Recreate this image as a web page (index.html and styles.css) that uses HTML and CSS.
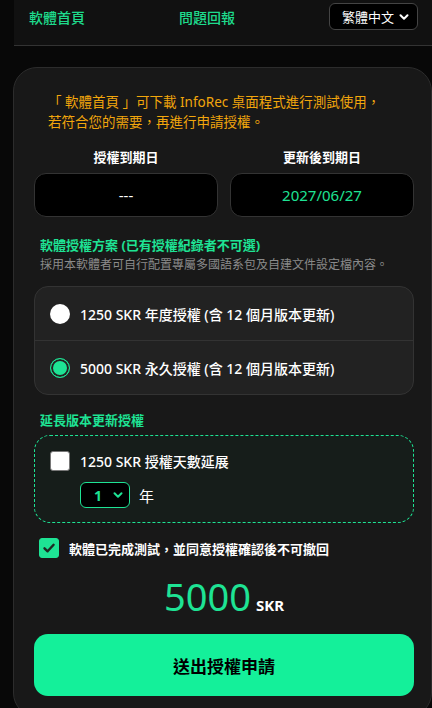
FILE: index.html
```html
<!DOCTYPE html>
<html lang="zh-Hant">
<head>
    <meta charset="UTF-8">
    <meta name="viewport" content="width=device-width, initial-scale=1.0">
    <title>InfoRec 授權申請</title>
    <link rel="stylesheet" href="styles.css">
</head>
<body>
    <div class="page">
        <header class="topbar">
            <a class="nav-link" href="#">軟體首頁</a>
            <a class="nav-link" href="#">問題回報</a>
            <div class="lang-select">
                <span>繁體中文</span>
                <svg width="12" height="12" viewBox="0 0 12 12"><path d="M2.5 4.2 6 7.7l3.5-3.5" fill="none" stroke="#fff" stroke-width="2" stroke-linecap="round" stroke-linejoin="round"/></svg>
            </div>
        </header>

        <main class="card">
            <p class="notice">「 軟體首頁 」可下載 InfoRec 桌面程式進行測試使用，<br>若符合您的需要，再進行申請授權。</p>

            <div class="dates">
                <div class="date-col">
                    <div class="date-label">授權到期日</div>
                    <div class="date-box">---</div>
                </div>
                <div class="date-col">
                    <div class="date-label">更新後到期日</div>
                    <div class="date-box green">2027/06/27</div>
                </div>
            </div>

            <div class="section-title">軟體授權方案 (已有授權紀錄者不可選)</div>
            <div class="section-sub">採用本軟體者可自行配置專屬多國語系包及自建文件設定檔內容。</div>

            <div class="plans">
                <label class="plan">
                    <input type="radio" name="plan" class="radio">
                    <span>1250 SKR 年度授權 (含 12 個月版本更新)</span>
                </label>
                <label class="plan">
                    <input type="radio" name="plan" class="radio" checked>
                    <span>5000 SKR 永久授權 (含 12 個月版本更新)</span>
                </label>
            </div>

            <div class="section-title ext-title">延長版本更新授權</div>
            <div class="extend">
                <label class="extend-row">
                    <span class="box"></span>
                    <span>1250 SKR 授權天數延展</span>
                </label>
                <div class="year-row">
                    <div class="year-select">
                        <span>1</span>
                        <svg width="12" height="12" viewBox="0 0 12 12"><path d="M2.5 4.2 6 7.7l3.5-3.5" fill="none" stroke="#1ee394" stroke-width="2" stroke-linecap="round" stroke-linejoin="round"/></svg>
                    </div>
                    <span class="year-unit">年</span>
                </div>
            </div>

            <label class="agree">
                <span class="box checked">
                    <svg width="14" height="14" viewBox="0 0 14 14"><path d="M2.5 7.3 5.6 10.3 11.6 3.8" fill="none" stroke="#1e2a24" stroke-width="2.4" stroke-linecap="round" stroke-linejoin="round"/></svg>
                </span>
                <span>軟體已完成測試，並同意授權確認後不可撤回</span>
            </label>

            <div class="total">
                <span class="amount">5000</span>
                <span class="unit">SKR</span>
            </div>

            <button class="submit">送出授權申請</button>
        </main>
    </div>
</body>
</html>
```

FILE: styles.css
```css
body {
    margin: 0;
    background: #080808;
    font-family: "Noto Sans", "Noto Sans CJK TC", sans-serif;
    color: #fff;
    overflow: hidden;
}
.page {
    padding-left: 14px;
}
.topbar {
    display: flex;
    align-items: center;
    gap: 94px;
    height: 27px;
    padding: 3px 0 15px 15px;
    background: #111;
    border-bottom: 1px solid #333;
}
.nav-link {
    color: #1edb8c;
    text-decoration: none;
    font-size: 14px;
    font-weight: 500;
}
.lang-select {
    display: flex;
    align-items: center;
    justify-content: space-between;
    box-sizing: border-box;
    width: 89px;
    height: 27px;
    padding: 0 7px 0 12px;
    background: #000;
    border: 1px solid #444;
    border-radius: 6px;
    font-size: 13px;
}
.card {
    display: block;
    margin: 21px 0 0 -1px;
    padding: 20px 17px 20px 20px;
    background: #181818;
    border: 1px solid #2c2c2c;
    border-radius: 24px;
}
.notice {
    margin: 4px 0 0;
    padding: 0 0 0 14px;
    color: #f2a60c;
    font-size: 13.5px;
    line-height: 20px;
    white-space: nowrap;
}
.dates {
    display: grid;
    grid-template-columns: 1fr 1fr;
    gap: 12px;
    margin-top: 16px;
}
.date-col {
    display: flex;
    flex-direction: column;
    align-items: center;
    gap: 7px;
}
.date-label {
    font-size: 13px;
    font-weight: 700;
    line-height: 18px;
}
.date-box {
    display: flex;
    align-items: center;
    justify-content: center;
    box-sizing: border-box;
    width: 100%;
    height: 44px;
    background: #000;
    border: 1px solid #333;
    border-radius: 12px;
    font-size: 15px;
}
.green {
    color: #1ee394;
}
.section-title {
    margin: 19px 0 0 6px;
    color: #1ee394;
    font-size: 13px;
    font-weight: 700;
    line-height: 18px;
}
.section-sub {
    margin: 2px 0 0 6px;
    color: #8a8a8a;
    font-size: 12px;
    line-height: 18px;
}
.plans {
    margin-top: 12px;
    background: #222;
    border: 1px solid #333;
    border-radius: 14px;
}
.plan {
    display: flex;
    align-items: center;
    gap: 10px;
    height: 53px;
    padding-left: 15px;
    font-size: 14px;
    font-weight: 500;
}
.plan + .plan {
    border-top: 1px solid #333;
}
.radio {
    appearance: none;
    width: 20px;
    height: 20px;
    margin: 0;
    border-radius: 50%;
    background: #fff;
}
.radio:checked {
    background: #1ee394;
    border: 1.5px solid #1ee394;
    box-shadow: inset 0 0 0 2px #222;
}
.ext-title {
    margin-top: 16px;
}
.extend {
    margin-top: 6px;
    padding: 15px 15px 14px;
    background: #161d1a;
    border: 1px dashed #1ee394;
    border-radius: 16px;
}
.extend-row {
    display: flex;
    align-items: center;
    gap: 10px;
    font-size: 14px;
    font-weight: 500;
}
.box {
    display: flex;
    align-items: center;
    justify-content: center;
    box-sizing: border-box;
    width: 20px;
    height: 20px;
    background: #fff;
    border: 1px solid #777;
    border-radius: 3px;
}
.box.checked {
    background: #1ee394;
    border-color: #1ee394;
}
.year-row {
    display: flex;
    align-items: center;
    gap: 9px;
    margin: 11px 0 0 30px;
}
.year-select {
    display: flex;
    align-items: center;
    justify-content: space-between;
    box-sizing: border-box;
    width: 50px;
    height: 26px;
    padding: 0 5px 0 13px;
    background: #000;
    border: 1px solid #1ee394;
    border-radius: 6px;
    color: #1ee394;
    font-size: 14px;
    font-weight: 700;
}
.year-unit {
    font-size: 15px;
}
.agree {
    display: flex;
    align-items: center;
    gap: 10px;
    margin: 15px 0 0 5px;
    font-size: 13px;
    font-weight: 700;
}
.total {
    display: flex;
    align-items: baseline;
    justify-content: center;
    gap: 5px;
    margin-top: 12px;
    line-height: 52px;
}
.amount {
    color: #1ee394;
    font-size: 38px;
}
.unit {
    font-size: 15px;
    font-weight: 700;
}
.submit {
    display: block;
    width: 100%;
    height: 62px;
    margin-top: 3px;
    background: #14f09a;
    color: #000;
    border: none;
    border-radius: 14px;
    font-family: inherit;
    font-size: 17px;
    font-weight: 700;
    cursor: pointer;
}
```
